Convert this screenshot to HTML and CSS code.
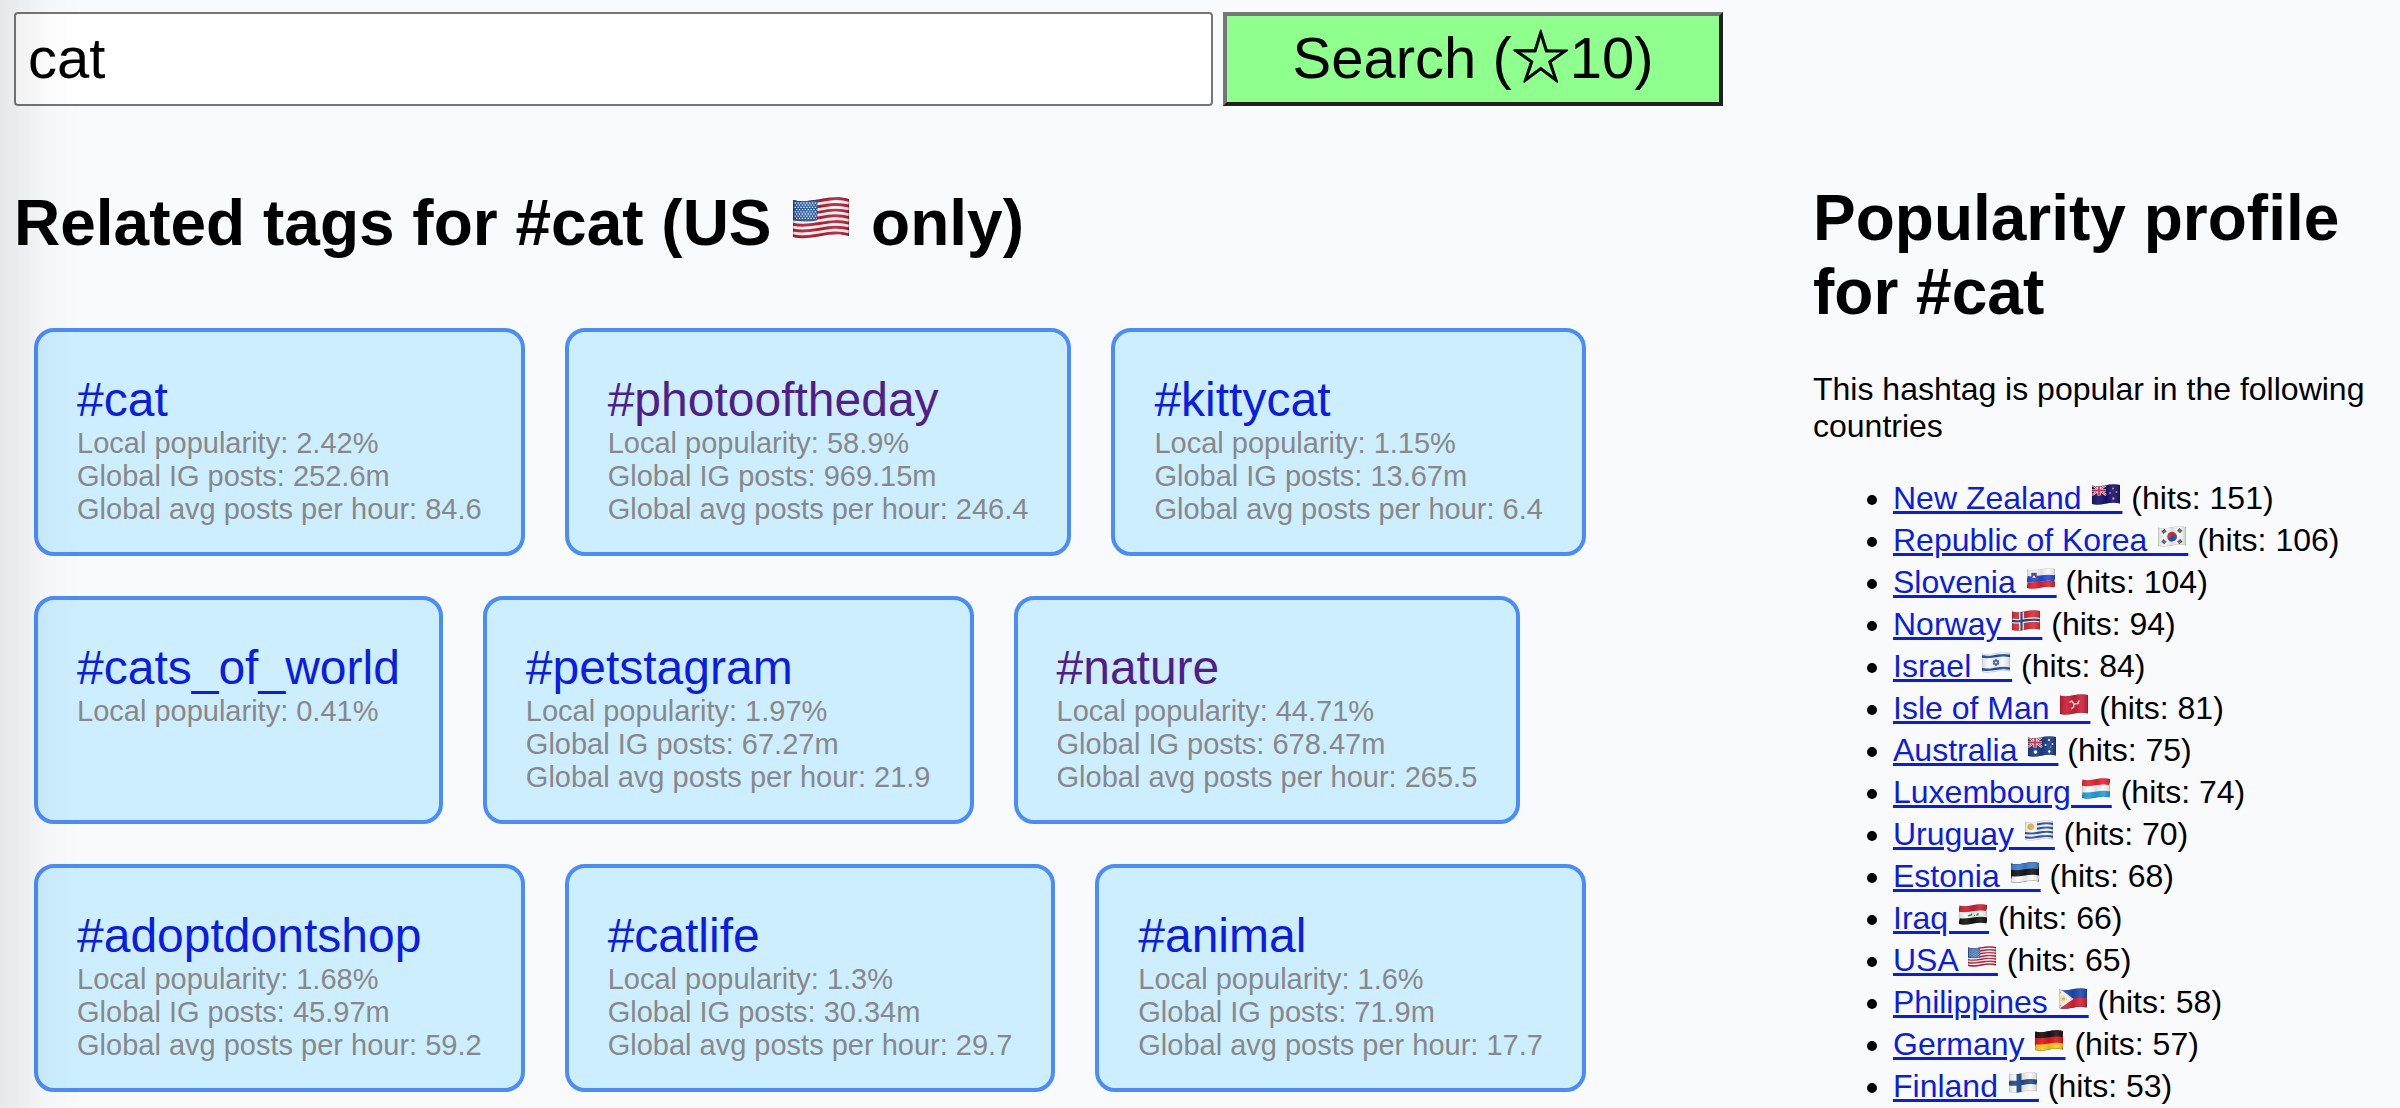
FILE: index.html
```html
<!DOCTYPE html>
<html lang="en">
<head>
<meta charset="utf-8">
<title>Related tags for #cat</title>
<link rel="stylesheet" href="styles.css">
</head>
<body>
<svg class="sprite" aria-hidden="true">
  <defs>
    <clipPath id="cloth"><path d="M0 1.5c9 2.5 18-3.5 28-.5v18.5c-10-3-19 3-28 .5z"/></clipPath>
    <linearGradient id="shade">
      <stop offset="0" stop-color="#000" stop-opacity=".12"/>
      <stop offset=".25" stop-color="#fff" stop-opacity=".08"/>
      <stop offset=".5" stop-color="#000" stop-opacity=".1"/>
      <stop offset=".75" stop-color="#fff" stop-opacity=".1"/>
      <stop offset="1" stop-color="#000" stop-opacity=".16"/>
    </linearGradient>
    <path id="wave" d="M0 0c9 2.5 18-3.5 28-.5" fill="none"/>
    <g id="fold">
      <rect width="28" height="21" fill="url(#shade)"/>
      <path d="M0 1.5c9 2.5 18-3.5 28-.5v18.5c-10-3-19 3-28 .5z" fill="none" stroke="#000" stroke-opacity=".22" stroke-width=".8"/>
    </g>
    <g id="jack">
      <path d="M0 1l14 10M0 11L14 1" stroke="#fff" stroke-width="2.2"/>
      <path d="M0 1l14 10M0 11L14 1" stroke="#d8213b" stroke-width=".9"/>
      <path d="M7 1v10.5M0 6.5h14" stroke="#fff" stroke-width="3.2"/>
      <path d="M7 1v10.5M0 6.5h14" stroke="#d8213b" stroke-width="1.8"/>
    </g>
  </defs>
  <symbol id="us" viewBox="0 0 28 21"><g clip-path="url(#cloth)">
    <rect width="28" height="21" fill="#c01c33"/>
    <g stroke="#fff" stroke-width="1.4"><use href="#wave" y="3.6"/><use href="#wave" y="6.5"/><use href="#wave" y="9.3"/><use href="#wave" y="12.2"/><use href="#wave" y="15"/><use href="#wave" y="17.9"/></g>
    <path d="M0 0h12.2v11.6Q7 12.8 0 11.6z" fill="#2457a3"/>
    <g stroke="#fff" stroke-width=".65" stroke-dasharray=".65 .8" fill="none"><path d="M.8 3h11M1.5 4.1h10.4M.8 5.2h11M1.5 6.3h10.4M.8 7.4h11M1.5 8.5h10.4M.8 9.6h11M1.5 10.7h10.4"/></g>
    <use href="#fold"/></g></symbol>
  <symbol id="nz" viewBox="0 0 28 21"><g clip-path="url(#cloth)">
    <rect width="28" height="21" fill="#15156f"/><use href="#jack"/>
    <g fill="#e66a80"><circle cx="21" cy="4.5" r="1"/><circle cx="18" cy="9" r="1"/><circle cx="24.5" cy="8" r="1"/><circle cx="21.3" cy="14.5" r="1.2"/></g>
    <use href="#fold"/></g></symbol>
  <symbol id="kr" viewBox="0 0 28 21"><g clip-path="url(#cloth)">
    <rect width="28" height="21" fill="#f6f6f6"/>
    <circle cx="14" cy="10.6" r="4.8" fill="#d52d42"/><path d="M9.500 12.300a4.800 4.800 0 0 0 9.100-3c-1.700-1.500-3.200-.6-4.400.9s-3.200 2.900-4.700 2.100z" fill="#1f5bab"/>
    <g stroke="#222" stroke-width="3.600" stroke-dasharray="1 .4"><path d="M4.500 6.500l3.200-2.400M20.300 16.700l3.200-2.400M4.500 14.500l3.200 2.700M20.300 3.500l3.200 2.700"/></g>
    <use href="#fold"/></g></symbol>
  <symbol id="si" viewBox="0 0 28 21"><g clip-path="url(#cloth)">
    <rect width="28" height="21" fill="#f8f8f8"/>
    <use href="#wave" y="11" stroke="#1c4ddb" stroke-width="6.2"/><use href="#wave" y="17.500" stroke="#e31f26" stroke-width="7"/>
    <path d="M4.500 5h5v4q-.5 2.500-2.500 3-2-.5-2.500-3z" fill="#1c4da5" stroke="#d8213b" stroke-width=".5"/><path d="M5.200 9.700l1.800-2.400 1.800 2.400z" fill="#fff"/>
    <use href="#fold"/></g></symbol>
  <symbol id="no" viewBox="0 0 28 21"><g clip-path="url(#cloth)">
    <rect width="28" height="21" fill="#e02b36"/>
    <path d="M9.500 0v21" stroke="#fff" stroke-width="4.600"/><use href="#wave" y="10.800" stroke="#fff" stroke-width="4.600"/>
    <path d="M9.500 0v21" stroke="#1e3f80" stroke-width="2.200"/><use href="#wave" y="10.800" stroke="#1e3f80" stroke-width="2.200"/>
    <use href="#fold"/></g></symbol>
  <symbol id="il" viewBox="0 0 28 21"><g clip-path="url(#cloth)">
    <rect width="28" height="21" fill="#f7f8fb"/>
    <g stroke="#1c4fa5" stroke-width="2.400"><use href="#wave" y="4.500"/><use href="#wave" y="17.200"/></g>
    <path d="M14 7.200l2.800 4.900h-5.600zM14 13.800l2.800-4.900h-5.600z" fill="none" stroke="#1c4fa5" stroke-width=".9"/>
    <use href="#fold"/></g></symbol>
  <symbol id="im" viewBox="0 0 28 21"><g clip-path="url(#cloth)">
    <rect width="28" height="21" fill="#cc1f38"/>
    <path d="M14 10l-2-2.800-2.500.8M14 10l4-.5 1-3M14 10l-.5 3.200-2.500 1.800" fill="none" stroke="#f3dfe0" stroke-width="1.500"/>
    <use href="#fold"/></g></symbol>
  <symbol id="au" viewBox="0 0 28 21"><g clip-path="url(#cloth)">
    <rect width="28" height="21" fill="#1c3e86"/><use href="#jack"/>
    <g fill="#fff"><circle cx="7.500" cy="16" r="1.800"/><circle cx="21" cy="4" r="1"/><circle cx="17.500" cy="9" r="1"/><circle cx="24.500" cy="8" r="1"/><circle cx="21.300" cy="15.500" r="1.200"/><circle cx="22.800" cy="11" r=".6"/></g>
    <use href="#fold"/></g></symbol>
  <symbol id="lu" viewBox="0 0 28 21"><g clip-path="url(#cloth)">
    <rect width="28" height="21" fill="#f9f9f9"/>
    <use href="#wave" y="4.200" stroke="#ea2434" stroke-width="7"/><use href="#wave" y="17.500" stroke="#1f9fda" stroke-width="7"/>
    <use href="#fold"/></g></symbol>
  <symbol id="uy" viewBox="0 0 28 21"><g clip-path="url(#cloth)">
    <rect width="28" height="21" fill="#f9f9f9"/>
    <g stroke="#2850a5" stroke-width="2"><use href="#wave" y="4.600"/><use href="#wave" y="8.800"/><use href="#wave" y="13"/><use href="#wave" y="17.200"/></g>
    <path d="M0 0h12v11.500H0z" fill="#f9f9f9"/><circle cx="5.800" cy="6.800" r="3" fill="#e8b53c" stroke="#c18a2a" stroke-width=".6" stroke-dasharray="1 .6"/>
    <use href="#fold"/></g></symbol>
  <symbol id="ee" viewBox="0 0 28 21"><g clip-path="url(#cloth)">
    <rect width="28" height="21" fill="#151515"/>
    <use href="#wave" y="4.200" stroke="#3d7dd0" stroke-width="7"/><use href="#wave" y="17.500" stroke="#fafafa" stroke-width="7"/>
    <use href="#fold"/></g></symbol>
  <symbol id="iq" viewBox="0 0 28 21"><g clip-path="url(#cloth)">
    <rect width="28" height="21" fill="#f7f7f7"/>
    <use href="#wave" y="4.200" stroke="#d01f33" stroke-width="7"/><use href="#wave" y="17.500" stroke="#141414" stroke-width="7"/>
    <path d="M9 11.800l3.500-.8V9.500M15 11.500l1-.3M17 10.800h2v-2" fill="none" stroke="#16914b" stroke-width="1.300"/>
    <use href="#fold"/></g></symbol>
  <symbol id="ph" viewBox="0 0 28 21"><g clip-path="url(#cloth)">
    <rect width="28" height="21" fill="#1c48b5"/>
    <use href="#wave" y="16" stroke="#d81f33" stroke-width="10"/>
    <path d="M0 0l14.500 11L0 21z" fill="#f9f9f9"/>
    <circle cx="4.700" cy="11" r="1.800" fill="#eeb72c"/><circle cx="4.700" cy="11" r="2.900" fill="none" stroke="#eeb72c" stroke-width="1" stroke-dasharray=".8 1"/><circle cx="1.500" cy="4.500" r=".7" fill="#eeb72c"/><circle cx="1.500" cy="17.500" r=".7" fill="#eeb72c"/><circle cx="12" cy="11" r=".7" fill="#eeb72c"/>
    <use href="#fold"/></g></symbol>
  <symbol id="de" viewBox="0 0 28 21"><g clip-path="url(#cloth)">
    <rect width="28" height="21" fill="#e8131a"/>
    <use href="#wave" y="4.200" stroke="#141414" stroke-width="7"/><use href="#wave" y="17.500" stroke="#f8cb1d" stroke-width="7"/>
    <use href="#fold"/></g></symbol>
  <symbol id="fi" viewBox="0 0 28 21"><g clip-path="url(#cloth)">
    <rect width="28" height="21" fill="#f8f8f8"/>
    <path d="M10 0v21" stroke="#234d88" stroke-width="5"/><use href="#wave" y="10.800" stroke="#234d88" stroke-width="5"/>
    <use href="#fold"/></g></symbol>
</svg>

<div class="layout">
  <form class="search">
    <input class="search-box" type="text" name="tag" value="cat" aria-label="Hashtag">
    <button class="search-button" type="submit">Search (<span class="star">☆</span>10)</button>
  </form>

  <main class="related">
    <h1>Related tags for #cat (US <svg class="flag-large" role="img" aria-label="USA"><use href="#us"/></svg> only)</h1>
    <div class="tags">
      <article class="tag"><a class="tag-name" href="#cat">#cat</a><p>Local popularity: 2.42%</p><p>Global IG posts: 252.6m</p><p>Global avg posts per hour: 84.6</p></article>
      <article class="tag"><a class="tag-name visited" href="#photooftheday">#photooftheday</a><p>Local popularity: 58.9%</p><p>Global IG posts: 969.15m</p><p>Global avg posts per hour: 246.4</p></article>
      <article class="tag"><a class="tag-name" href="#kittycat">#kittycat</a><p>Local popularity: 1.15%</p><p>Global IG posts: 13.67m</p><p>Global avg posts per hour: 6.4</p></article>
      <article class="tag"><a class="tag-name" href="#cats_of_world">#cats_of_world</a><p>Local popularity: 0.41%</p></article>
      <article class="tag"><a class="tag-name" href="#petstagram">#petstagram</a><p>Local popularity: 1.97%</p><p>Global IG posts: 67.27m</p><p>Global avg posts per hour: 21.9</p></article>
      <article class="tag"><a class="tag-name visited" href="#nature">#nature</a><p>Local popularity: 44.71%</p><p>Global IG posts: 678.47m</p><p>Global avg posts per hour: 265.5</p></article>
      <article class="tag"><a class="tag-name" href="#adoptdontshop">#adoptdontshop</a><p>Local popularity: 1.68%</p><p>Global IG posts: 45.97m</p><p>Global avg posts per hour: 59.2</p></article>
      <article class="tag"><a class="tag-name" href="#catlife">#catlife</a><p>Local popularity: 1.3%</p><p>Global IG posts: 30.34m</p><p>Global avg posts per hour: 29.7</p></article>
      <article class="tag"><a class="tag-name" href="#animal">#animal</a><p>Local popularity: 1.6%</p><p>Global IG posts: 71.9m</p><p>Global avg posts per hour: 17.7</p></article>
    </div>
  </main>

  <aside class="profile">
    <h1>Popularity profile for #cat</h1>
    <p>This hashtag is popular in the following countries</p>
    <ul class="countries">
      <li><a href="#nz">New Zealand &emsp;<svg class="flag"><use href="#nz"/></svg></a> (hits: 151)</li>
      <li><a href="#kr">Republic of Korea &emsp;<svg class="flag"><use href="#kr"/></svg></a> (hits: 106)</li>
      <li><a href="#si">Slovenia &emsp;<svg class="flag"><use href="#si"/></svg></a> (hits: 104)</li>
      <li><a href="#no">Norway &emsp;<svg class="flag"><use href="#no"/></svg></a> (hits: 94)</li>
      <li><a href="#il">Israel &emsp;<svg class="flag"><use href="#il"/></svg></a> (hits: 84)</li>
      <li><a href="#im">Isle of Man &emsp;<svg class="flag"><use href="#im"/></svg></a> (hits: 81)</li>
      <li><a href="#au">Australia &emsp;<svg class="flag"><use href="#au"/></svg></a> (hits: 75)</li>
      <li><a href="#lu">Luxembourg &emsp;<svg class="flag"><use href="#lu"/></svg></a> (hits: 74)</li>
      <li><a href="#uy">Uruguay &emsp;<svg class="flag"><use href="#uy"/></svg></a> (hits: 70)</li>
      <li><a href="#ee">Estonia &emsp;<svg class="flag"><use href="#ee"/></svg></a> (hits: 68)</li>
      <li><a href="#iq">Iraq &emsp;<svg class="flag"><use href="#iq"/></svg></a> (hits: 66)</li>
      <li><a href="#us">USA &emsp;<svg class="flag"><use href="#us"/></svg></a> (hits: 65)</li>
      <li><a href="#ph">Philippines &emsp;<svg class="flag"><use href="#ph"/></svg></a> (hits: 58)</li>
      <li><a href="#de">Germany &emsp;<svg class="flag"><use href="#de"/></svg></a> (hits: 57)</li>
      <li><a href="#fi">Finland &emsp;<svg class="flag"><use href="#fi"/></svg></a> (hits: 53)</li>
    </ul>
  </aside>
</div>
</body>
</html>
```
FILE: styles.css
```css
* {
  box-sizing: border-box;
}

body {
  margin: 0;
  padding: 12px 14px 0;
  background: #f9fafc;
  color: #000;
  font: 32px/37px "Liberation Sans", Arial, "Noto Sans CJK JP", sans-serif;
}

/* soft shadow along the left window edge, over the content */
body::before {
  content: "";
  position: fixed;
  inset: 0 auto 0 0;
  width: 84px;
  background: linear-gradient(to right, rgba(0, 0, 0, .07), rgba(0, 0, 0, .04) 35%, rgba(0, 0, 0, .01) 60%, transparent);
  pointer-events: none;
  z-index: 1;
}

.sprite {
  position: absolute;
  width: 0;
  height: 0;
}

.layout {
  display: grid;
  grid-template-columns: 3fr 1fr;
  column-gap: 80px;
  align-items: start;
}

.search {
  display: grid;
  grid-template-columns: 12fr 5fr;
  gap: 10px;
  padding-right: 10px;
}

.search-box,
.search-button {
  min-width: 0;
  height: 94px;
  margin: 0;
  padding: 0 12px 3px;
  font: inherit;
  font-size: 58px;
  color: #000;
}

.search-box {
  border: 2px solid #767676;
  border-radius: 4px;
  background: #fff;
}

.search-button {
  border: 4px solid;
  border-color: #767676 #212121 #212121 #767676;
  background: #8fff8e;
}

.star {
  -webkit-text-stroke: 1px #000;
}

h1 {
  margin: 0;
  font-size: 64px;
  line-height: 74px;
}

.related {
  grid-column: 1;
  margin-top: 80px;
}

.flag-large {
  width: 56px;
  height: 42px;
  margin: 0 4px;
  vertical-align: 6px;
}

.tags {
  display: flex;
  flex-wrap: wrap;
  gap: 40px;
  margin: 68px 20px 0;
}

.tag {
  padding: 40px 39px 26px;
  border: 4px solid #4b8df8;
  border-radius: 20px;
  background: #cceeff;
  color: #888;
  font-size: 29px;
  line-height: 33px;
}

.tag p {
  margin: 0;
}

.tag-name {
  display: block;
  font-size: 48px;
  line-height: 55px;
  text-decoration: none;
}

a {
  color: #0b1de0;
}

.visited {
  color: #511e87;
}

.profile {
  grid-column: 2;
  margin-top: 75px;
}

.profile p {
  margin: 42px 0 32px;
}

.countries {
  margin: 0;
  padding-left: 80px;
  line-height: 42px;
}

.countries a {
  text-decoration-thickness: 3px;
}

.flag {
  width: 28px;
  height: 21px;
  margin: 0 2px 0 -30px;
  vertical-align: 4px;
}
```
